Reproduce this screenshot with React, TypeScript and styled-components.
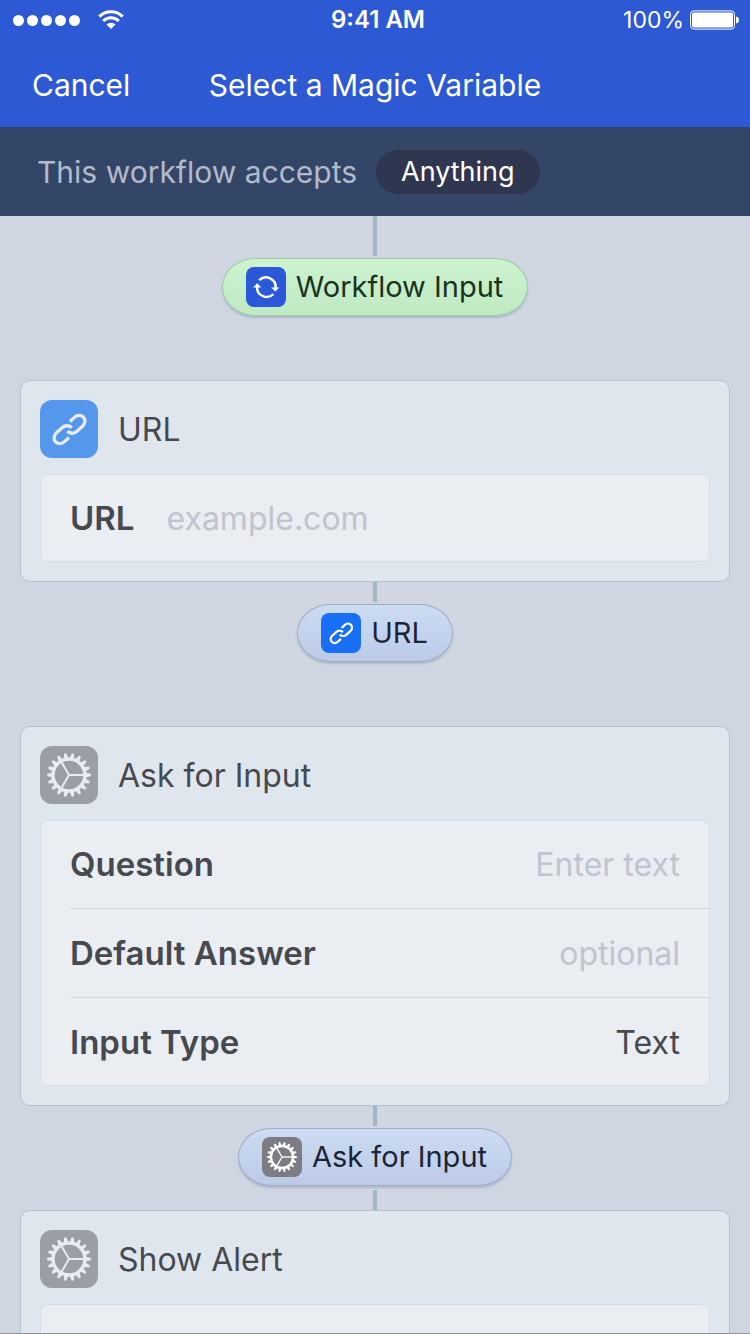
import React from "react";
import styled, { createGlobalStyle } from "styled-components";

const GlobalStyle = createGlobalStyle`
  *, *::before, *::after { box-sizing: border-box; }
  body {
    margin: 0;
    background: #cfd6e2;
    font-family: Inter, "Liberation Sans", sans-serif;
  }
  button, input, select {
    font: inherit;
    color: inherit;
    margin: 0;
    padding: 0;
    border: 0;
    background: none;
  }
  button { cursor: pointer; }
`;

const Screen = styled.div`
  display: flex;
  flex-direction: column;
  height: 100vh;
  border-bottom: 1px solid #8f949c;
`;

const Header = styled.header`
  flex: none;
  background: #2d59d5;
  border-bottom: 1px solid #2b4482;
  color: #fff;
`;

const StatusBar = styled.div`
  display: grid;
  grid-template-columns: 1fr auto 1fr;
  align-items: center;
  height: 40px;
  padding: 0 11px 0 13px;
  font-size: 23px;
  line-height: 40px;
`;

const Signal = styled.div`
  display: flex;
  align-items: center;
  gap: 3px;
`;

const SignalDot = styled.span`
  width: 11px;
  height: 11px;
  border-radius: 50%;
  background: #fff;
`;

const WifiSvg = styled.svg`
  margin-left: 15px;
`;

const Clock = styled.time`
  font-size: 24px;
  font-weight: 600;
  padding-left: 4px;
`;

const Power = styled.div`
  display: flex;
  align-items: center;
  justify-content: flex-end;
  gap: 6px;
`;

const NavBar = styled.nav`
  display: grid;
  grid-template-columns: 1fr auto 1fr;
  align-items: center;
  height: 87px;
  padding: 3px 32px 0;
  font-size: 30px;
  line-height: 40px;
`;

const NavButton = styled.button`
  justify-self: start;
`;

const NavTitle = styled.h1`
  margin: 0;
  font-size: 30px;
  font-weight: 400;
`;

const AcceptsBar = styled.div`
  flex: none;
  display: flex;
  align-items: center;
  gap: 19px;
  height: 88px;
  padding: 0 37px;
  background: #334668;
  color: #b3bbca;
  font-size: 30px;
`;

const AcceptsButton = styled.button`
  height: 44px;
  padding: 0 25px;
  border-radius: 22px;
  background: #2f3650;
  color: #fff;
  font-size: 27px;
  line-height: 44px;
`;

const Flow = styled.main`
  flex: 1;
  min-height: 0;
  overflow-y: auto;
  scrollbar-width: none;
  padding: 0 20px;
`;

const Link = styled.div<{ $length: number }>`
  width: 4px;
  height: ${(p) => p.$length}px;
  margin: 0 auto;
  background: #a3b5c3;
`;

const PillSlot = styled.div<{ $after: number }>`
  display: flex;
  justify-content: center;
  padding: 2px 0 ${(p) => p.$after}px;
`;

const Pill = styled.button<{ $tone: "green" | "blue" }>`
  display: flex;
  align-items: center;
  gap: 10px;
  height: 58px;
  padding: 0 24px 0 23px;
  border: 1px solid ${(p) => (p.$tone === "green" ? "#9dc9a3" : "#9dabc9")};
  border-radius: 33px / 29px;
  background: ${(p) =>
    p.$tone === "green"
      ? "linear-gradient(#cdf3cf, #bfe9c3)"
      : "linear-gradient(#ccdcf2, #bccae8)"};
  box-shadow: 0 2px 2px rgba(80, 95, 125, 0.25);
  color: ${(p) => (p.$tone === "green" ? "#19331d" : "#1b2536")};
  font-size: 29px;
  line-height: 40px;
`;

const Card = styled.section`
  padding: 19px;
  border: 1px solid #b0c2d0;
  border-radius: 10px;
  background: #dfe6ee;
  color: #46494e;
`;

const CardHeader = styled.div`
  display: flex;
  align-items: center;
  gap: 20px;
  margin-bottom: 16px;
`;

const CardTitle = styled.h2`
  margin: 0;
  padding-top: 2px;
  font-size: 32px;
  font-weight: 400;
  line-height: 40px;
`;

const Fields = styled.div`
  padding-left: 30px;
  border-radius: 8px;
  background: #eaedf2;
  box-shadow: inset 0 0 0 1px #d7dfe9;
`;

const Row = styled.div`
  display: flex;
  align-items: center;
  gap: 32px;
  height: 88px;
  padding-right: 30px;

  & + & {
    height: 89px;
    border-top: 1px solid #d0d7df;
  }
`;

const Label = styled.label`
  flex: none;
  font-size: 33px;
  font-weight: 600;
  line-height: 40px;
`;

const TextInput = styled.input<{ $align?: "right" }>`
  flex: 1;
  min-width: 0;
  height: 44px;
  font-size: 32px;
  text-align: ${(p) => p.$align ?? "left"};
  outline: none;

  &::placeholder {
    color: #c0c4cf;
    opacity: 1;
  }
`;

const Picker = styled.select`
  flex: 1;
  min-width: 0;
  height: 44px;
  appearance: none;
  font-size: 32px;
  text-align: right;
  text-align-last: right;
  outline: none;
`;

const Tile = styled.span<{ $size: number; $color: string; $ink: string }>`
  flex: none;
  display: block;
  width: ${(p) => p.$size}px;
  height: ${(p) => p.$size}px;
  border-radius: ${(p) => (p.$size > 50 ? 12 : 8)}px;
  background: ${(p) => p.$color};
  color: ${(p) => p.$ink};

  svg { display: block; width: 100%; height: 100%; }
`;

const chainHalf =
  "M30 21.5L34.4 17.4C37.2 14.8 41.2 14.9 43.4 17.2C45.6 19.5 45.4 23.4 42.8 26L37 31.3C34.2 33.9 30 33.9 27.3 31.3";

const ChainIcon = () => (
  <svg viewBox="0 0 58 58" fill="none" stroke="currentColor" strokeWidth="3.3" aria-hidden="true">
    <path d={chainHalf} />
    <path d={chainHalf} transform="rotate(180 29.5 29.5)" />
  </svg>
);

const teeth = Array.from({ length: 18 }, (_, i) => i * 20);

const GearIcon = () => (
  <svg viewBox="0 0 58 58" aria-hidden="true">
    <circle cx="29" cy="29" r="16" fill="none" stroke="currentColor" strokeWidth="3.4" />
    {teeth.map((a) => (
      <path
        key={a}
        d="M46 26.8L50.6 27.8Q51.6 29 50.6 30.2L46 31.2Z"
        fill="currentColor"
        transform={`rotate(${a} 29 29)`}
      />
    ))}
    {[0, 120, 240].map((a) => (
      <path key={a} d="M29 29H44" stroke="currentColor" strokeWidth="2" transform={`rotate(${a} 29 29)`} />
    ))}
  </svg>
);

const CycleIcon = () => (
  <svg viewBox="0 0 40 40" fill="none" stroke="currentColor" strokeWidth="2.4" aria-hidden="true">
    <path d="M13.2 13.2A9.7 9.7 0 0 1 29.6 21" />
    <path d="M27.4 27.2A9.7 9.7 0 0 1 11 19.6" />
    <path d="M7.2 20.4H15.3L11.2 16.2Z" fill="currentColor" stroke="none" />
    <path d="M33.3 20.4H25.2L29.3 24.6Z" fill="currentColor" stroke="none" />
  </svg>
);

const WifiIcon = () => (
  <WifiSvg width="26" height="20" viewBox="0 0 26 20" fill="none" stroke="#fff" aria-hidden="true">
    <path d="M1.3 6.6A16.6 16.6 0 0 1 24.7 6.6" strokeWidth="3" />
    <path d="M5.2 11A11 11 0 0 1 20.8 11" strokeWidth="3" />
    <path d="M13 19L8.5 14.6A6.2 6.2 0 0 1 17.5 14.6Z" fill="#fff" stroke="none" />
  </WifiSvg>
);

const BatteryIcon = () => (
  <svg width="49" height="20" viewBox="0 0 49 20" aria-hidden="true">
    <rect x="0.5" y="0.9" width="44" height="18.2" rx="3.5" fill="none" stroke="#fff" />
    <rect x="2" y="2.4" width="41" height="15.2" rx="2" fill="#fff" />
    <path d="M46 6.5Q49 7 49 10T46 13.5Z" fill="#fff" />
  </svg>
);

const icons = { chain: ChainIcon, gear: GearIcon, cycle: CycleIcon };
type IconName = keyof typeof icons;

const solid: Record<IconName, string> = { chain: "#186ef5", gear: "#7d7c82", cycle: "#2a58d9" };
const faded: Record<IconName, string> = { chain: "#5597ed", gear: "#9b9ea7", cycle: "#6384dd" };

function Variable({
  icon,
  name,
  tone = "blue",
  after = 64,
}: {
  icon: IconName;
  name: string;
  tone?: "green" | "blue";
  after?: number;
}) {
  const Icon = icons[icon];
  return (
    <PillSlot $after={after}>
      <Pill type="button" $tone={tone}>
        <Tile $size={40} $color={solid[icon]} $ink="#fff">
          <Icon />
        </Tile>
        {name}
      </Pill>
    </PillSlot>
  );
}

function Action({ icon, title, children }: { icon: IconName; title: string; children: React.ReactNode }) {
  const Icon = icons[icon];
  return (
    <Card>
      <CardHeader>
        <Tile $size={58} $color={faded[icon]} $ink="#e8ebf1">
          <Icon />
        </Tile>
        <CardTitle>{title}</CardTitle>
      </CardHeader>
      <Fields>{children}</Fields>
    </Card>
  );
}

export default function App() {
  return (
    <>
      <GlobalStyle />
      <Screen>
        <Header>
          <StatusBar>
            <Signal>
              {[0, 1, 2, 3, 4].map((n) => (
                <SignalDot key={n} />
              ))}
              <WifiIcon />
            </Signal>
            <Clock>9:41 AM</Clock>
            <Power>
              100%
              <BatteryIcon />
            </Power>
          </StatusBar>
          <NavBar>
            <NavButton type="button">Cancel</NavButton>
            <NavTitle>Select a Magic Variable</NavTitle>
          </NavBar>
        </Header>
        <AcceptsBar>
          This workflow accepts
          <AcceptsButton type="button">Anything</AcceptsButton>
        </AcceptsBar>
        <Flow>
          <Link $length={40} />
          <Variable icon="cycle" name="Workflow Input" tone="green" />

          <Action icon="chain" title="URL">
            <Row>
              <Label htmlFor="url">URL</Label>
              <TextInput id="url" type="url" placeholder="example.com" />
            </Row>
          </Action>
          <Link $length={20} />
          <Variable icon="chain" name="URL" />

          <Action icon="gear" title="Ask for Input">
            <Row>
              <Label htmlFor="question">Question</Label>
              <TextInput id="question" $align="right" placeholder="Enter text" />
            </Row>
            <Row>
              <Label htmlFor="default-answer">Default Answer</Label>
              <TextInput id="default-answer" $align="right" placeholder="optional" />
            </Row>
            <Row>
              <Label htmlFor="input-type">Input Type</Label>
              <Picker id="input-type" defaultValue="Text">
                <option>Text</option>
              </Picker>
            </Row>
          </Action>
          <Link $length={20} />
          <Variable icon="gear" name="Ask for Input" after={4} />
          <Link $length={20} />

          <Action icon="gear" title="Show Alert">
            <Row />
          </Action>
        </Flow>
      </Screen>
    </>
  );
}
